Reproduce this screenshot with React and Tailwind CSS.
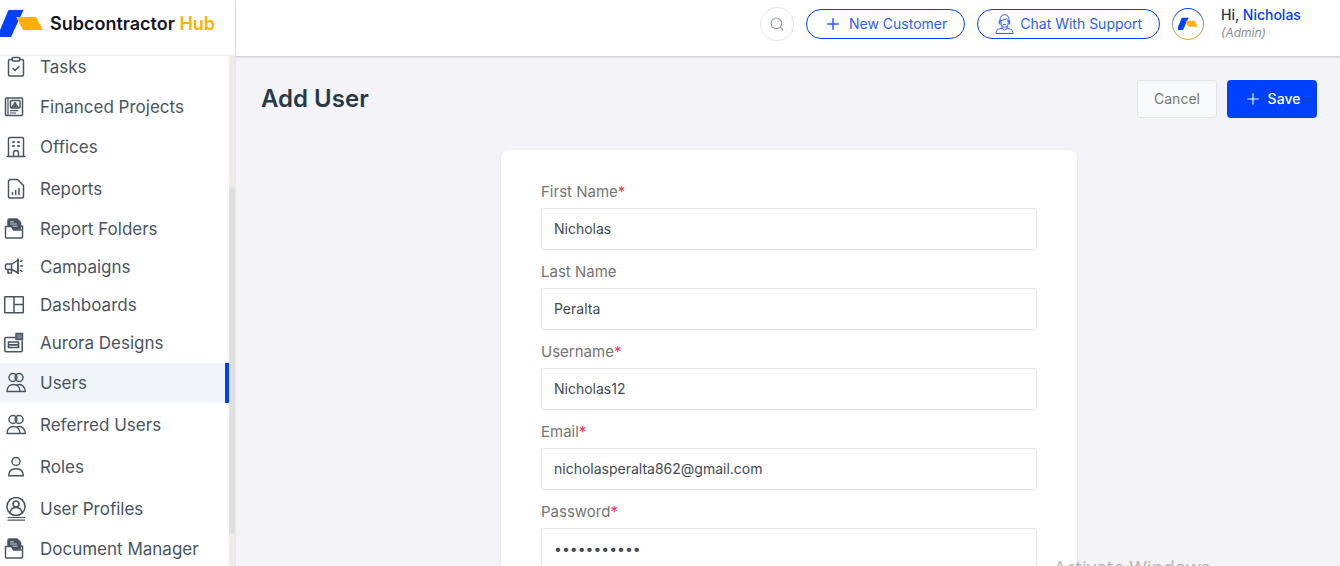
import { Plus, Search } from 'lucide-react'

const stroke = {
  fill: 'none',
  stroke: 'currentColor',
  strokeWidth: 1.5,
  strokeLinecap: 'round',
  strokeLinejoin: 'round',
}

function Icon({ children }) {
  return (
    <svg className="h-6 w-7 shrink-0" viewBox="0 0 28 24" aria-hidden="true" {...stroke}>
      {children}
    </svg>
  )
}

function TasksIcon() {
  return (
    <Icon>
      <path d="M11.5 4.500H10A1.500 1.500 0 0 0 8.500 6v13.500A1.500 1.500 0 0 0 10 21h12a1.500 1.500 0 0 0 1.500-1.500V6A1.500 1.500 0 0 0 22 4.500h-1.500" />
      <rect x="12" y="2.500" width="8" height="3.500" rx="1.500" />
      <path d="M13 13.500l2 2 4-4" />
    </Icon>
  )
}

function FinancedIcon() {
  return (
    <Icon>
      <rect x="5.500" y="3" width="17" height="17.500" rx="1" />
      <path d="M8 3v17.500M10.500 15.700h7.500M10.500 18h5" strokeWidth="1.200" />
      <rect x="10.500" y="5.500" width="9.500" height="7.500" rx="1" />
      <path d="M12 12.500l1.500-2.500 1.500 2 1.500-2 1.500 2.500" />
      <circle cx="15" cy="8.500" r="0.800" fill="currentColor" />
    </Icon>
  )
}

function OfficeIcon() {
  return (
    <Icon>
      <path d="M7 21.500h18M8.500 21.500V4A1.500 1.500 0 0 1 10 2.500h12A1.500 1.500 0 0 1 23.500 4v17.500M13.500 21.500V18a2.500 2.500 0 0 1 5 0v3.500" />
      <path d="M13 7h1M18 7h1M13 11h1M18 11h1" strokeWidth="1.800" />
    </Icon>
  )
}

function ReportIcon() {
  return (
    <Icon>
      <path d="M10.500 2.500h7l6 6v11a1.500 1.500 0 0 1-1.500 1.500H10a1.500 1.500 0 0 1-1.500-1.500V4.500a2 2 0 0 1 2-2z" />
      <path d="M12.500 17.500v-2M15.700 17.500v-4M19 17.500v-6" />
    </Icon>
  )
}

function FolderIcon() {
  return (
    <Icon>
      <path d="M8 9V3.500A1.500 1.500 0 0 1 9.500 2h7.500l3.500 3.500V11l-4 1.500h-3l-2-3.500z" fill="currentColor" />
      <path d="M10.500 4.800h3M10.500 7h6M13 9.200h4" stroke="white" strokeWidth="0.700" />
      <path d="M20.500 9h2v11a1 1 0 0 1-1 1H6.500a1 1 0 0 1-1-1V9.500h6l2 3.500h9" />
    </Icon>
  )
}

function CampaignIcon() {
  return (
    <Icon>
      <path d="M7 9h5l6-4v13l-6-3.500H7A1.500 1.500 0 0 1 5.500 13v-2.500A1.500 1.500 0 0 1 7 9zM11.500 9v5.500M8 14.500v3.500h3.500v-3.500M20.500 6.500l1.500-.800M20.500 11h2M20.500 15.500l1.500.800" />
      <path d="M18 4v14.500" />
    </Icon>
  )
}

function DashboardIcon() {
  return (
    <Icon>
      <rect x="4.700" y="3.700" width="18.600" height="16" rx="0.500" />
      <path d="M14 4v15.500M14 11.500h9" />
    </Icon>
  )
}

function DesignIcon() {
  return (
    <Icon>
      <path d="M15 6.500H6A1.200 1.200 0 0 0 4.800 7.700V19.500A1.200 1.200 0 0 0 6 20.700h15a1.200 1.200 0 0 0 1.200-1.200V10" />
      <rect x="16" y="2.500" width="6.500" height="6" fill="currentColor" fillOpacity="0.750" />
      <path d="M8.500 11h10v5.500h-10zM10 13.800h7" strokeWidth="1.700" />
    </Icon>
  )
}

function UsersIcon() {
  return (
    <Icon>
      <circle cx="13" cy="6.500" r="4" />
      <circle cx="19" cy="6.500" r="4" />
      <path d="M7 20.500c0-4.300 2.800-7 6.500-7s6.500 2.700 6.500 7zM17 13.900c4.500-1.400 8.200 1.600 8.200 6.600H20" />
    </Icon>
  )
}

function RoleIcon() {
  return (
    <Icon>
      <circle cx="16" cy="6.500" r="4" />
      <path d="M8.700 20.700c0-4.500 3-7 7.300-7s7.300 2.500 7.300 7z" />
    </Icon>
  )
}

function ProfileIcon() {
  return (
    <Icon>
      <circle cx="16" cy="9.500" r="9" />
      <circle cx="16" cy="7" r="3" />
      <path d="M10 16c.500-4 3-5.500 6-5.500s5.500 1.500 6 5.500" />
      <path d="M8 20.500h16.500M8 23.200h16.500" strokeWidth="1.200" />
    </Icon>
  )
}

function SupportIcon() {
  return (
    <svg className="h-5 w-5" viewBox="0 0 20 20" aria-hidden="true" {...stroke} strokeWidth="1">
      <path d="M5 8V5.500C5 2.500 7 .700 9.500 .700S14 2.500 14 5.500V8M6 6.500C8 6.500 10.500 5.500 11.500 4.500c.500 1 1 1.500 1.700 2V9c0 2.500-1.700 4.200-3.700 4.200S6 11.500 6 9z" />
      <path d="M5 7h-.700v3h1M14 7h.700v3h-1M8.500 10.500h2M7 12.500V14.500l2.500 1.500 2.500-1.500v-2M7 14.300c-3.500.700-6 1.200-6 5.200h17c0-4-2.500-4.500-6-5.200" />
    </svg>
  )
}

function LogoMark({ className }) {
  return (
    <svg className={className} viewBox="0 0 44 28" aria-hidden="true">
      <path d="M8.500 0H23.500L11 27H-3z" fill="#0040ff" />
      <path d="M16 7h20l7 13H23z" fill="#ffb000" />
    </svg>
  )
}

const navItems = [
  { label: 'Tasks', icon: TasksIcon, height: 'h-10' },
  { label: 'Financed Projects', icon: FinancedIcon, height: 'h-10' },
  { label: 'Offices', icon: OfficeIcon, height: 'h-10' },
  { label: 'Reports', icon: ReportIcon, height: 'h-11' },
  { label: 'Report Folders', icon: FolderIcon, height: 'h-9' },
  { label: 'Campaigns', icon: CampaignIcon, height: 'h-10' },
  { label: 'Dashboards', icon: DashboardIcon, height: 'h-9' },
  { label: 'Aurora Designs', icon: DesignIcon, height: 'h-10' },
  { label: 'Users', icon: UsersIcon, height: 'h-10', active: true },
  { label: 'Referred Users', icon: UsersIcon, height: 'h-11' },
  { label: 'Roles', icon: RoleIcon, height: 'h-10' },
  { label: 'User Profiles', icon: ProfileIcon, height: 'h-11' },
  { label: 'Document Manager', icon: FolderIcon, height: 'h-9' },
]

const fields = [
  { id: 'first-name', label: 'First Name', value: 'Nicholas', required: true },
  { id: 'last-name', label: 'Last Name', value: 'Peralta' },
  { id: 'username', label: 'Username', value: 'Nicholas12', required: true },
  { id: 'email', label: 'Email', value: 'nicholasperalta862@gmail.com', type: 'email', required: true },
  { id: 'password', label: 'Password', value: 'abcdefghijk', type: 'password', required: true },
]

function Sidebar() {
  return (
    <aside className="flex w-[236px] shrink-0 flex-col border-r border-[#e8e8ee] bg-white">
      <a href="#home" className="flex h-14 shrink-0 items-center border-b border-[#ececf0] pb-2">
        <LogoMark className="h-7 w-11 shrink-0" />
        <span className="pl-1.5 text-lg font-semibold whitespace-nowrap text-[#14142b]">
          Subcontractor <span className="text-[#ffb000]">Hub</span>
        </span>
      </a>
      <div className="flex min-h-0 flex-1">
        <nav className="min-w-0 flex-1 overflow-hidden">
          <ul className="-mt-[9px]">
            {navItems.map(({ label, icon: ItemIcon, height, active }) => (
              <li key={label}>
                <a
                  href={`#${label.toLowerCase().replace(' ', '-')}`}
                  className={`flex items-center gap-3 text-[17px] whitespace-nowrap text-[#475563] ${height} ${
                    active ? 'border-r-4 border-[#0040ff] bg-[#f1f5f9]' : ''
                  }`}
                >
                  <ItemIcon />
                  <span className="pt-0.5">{label}</span>
                </a>
              </li>
            ))}
          </ul>
        </nav>
        {/* Scroll track */}
        <div className="flex w-1.5 flex-col bg-[#efebeb] pt-[131px] pb-8">
          <div className="flex-1 rounded-full bg-[#dfdfdf]" />
        </div>
      </div>
    </aside>
  )
}

function Header() {
  return (
    <header className="flex h-14 shrink-0 items-center justify-end gap-3 bg-white pr-[23px] pb-2 shadow-[0_1px_2px_rgba(0,0,0,0.2)]">
      <button
        type="button"
        aria-label="Search"
        className="flex size-[34px] items-center justify-center rounded-full border border-[#e3e5ea] text-[#959cab]"
      >
        <Search className="size-4" strokeWidth={1.75} />
      </button>
      <button
        type="button"
        className="flex h-[30px] items-center gap-[7px] rounded-full border border-[#0040ff] px-[17px] text-sm whitespace-nowrap text-[#2b5cff]"
      >
        <Plus className="size-[18px]" />
        New Customer
      </button>
      <button
        type="button"
        className="flex h-[30px] items-center gap-[5px] rounded-full border border-[#0040ff] px-[17px] text-sm whitespace-nowrap text-[#2b5cff]"
      >
        <SupportIcon />
        Chat With Support
      </button>
      <div className="size-8 rounded-full bg-linear-to-b from-[#0040ff] to-[#ffb000] p-px">
        <div className="flex size-full items-center justify-center rounded-full bg-white">
          <LogoMark className="h-3.5 w-5" />
        </div>
      </div>
      <div className="w-[101px] pl-[5px] text-sm leading-[18px] whitespace-nowrap">
        <p className="font-medium text-[#263a47]">
          Hi, <a href="#profile" className="text-[#0040ff]">Nicholas</a>
        </p>
        <p className="text-xs leading-[18px] text-[#8c8c8c] italic">(Admin)</p>
      </div>
    </header>
  )
}

function Field({ id, label, value, type = 'text', required }) {
  return (
    <div>
      <label htmlFor={id} className="mb-1.5 block text-[15px] leading-5 text-[#757575]">
        {label}
        {required && <span className="text-[#ff2d46]">*</span>}
      </label>
      <input
        id={id}
        type={type}
        defaultValue={value}
        className="h-[42px] w-full rounded-[3px] border border-[#e2e5ea] bg-white px-3 pb-0.5 text-sm text-[#3f4a54] outline-none"
      />
    </div>
  )
}

export default function App() {
  return (
    <div className="flex h-screen overflow-hidden bg-[#f4f3f8] font-['Inter',sans-serif]">
      <Sidebar />
      <div className="flex min-w-0 flex-1 flex-col">
        <Header />
        <main className="min-h-0 flex-1 overflow-hidden pt-6 pr-[23px] pl-[25px]">
          <div className="flex items-center justify-between">
            <h1 className="text-2xl font-semibold text-[#263a47]">Add User</h1>
            <div className="flex gap-2.5 text-sm">
              <button
                type="button"
                className="h-[38px] w-20 rounded-[3px] border border-[#e2e5ea] bg-[#f8f9fb] text-[#757575]"
              >
                Cancel
              </button>
              <button
                type="submit"
                form="add-user"
                className="flex h-[38px] w-[90px] items-center justify-center gap-1.5 rounded bg-[#0040ff] font-medium text-white"
              >
                <Plus className="size-[18px]" strokeWidth={1.5} />
                Save
              </button>
            </div>
          </div>
          <form
            id="add-user"
            className="mx-auto mt-8 flex max-w-xl flex-col gap-3 rounded-lg bg-white px-10 py-8 shadow-sm"
          >
            {fields.map((field) => (
              <Field key={field.id} {...field} />
            ))}
          </form>
        </main>
      </div>
      {/* Desktop watermark */}
      <p className="pointer-events-none absolute right-[130px] -bottom-[15px] font-['Open_Sans',sans-serif] text-[19px] leading-7 text-[#999]/70">
        Activate Windows
      </p>
    </div>
  )
}
